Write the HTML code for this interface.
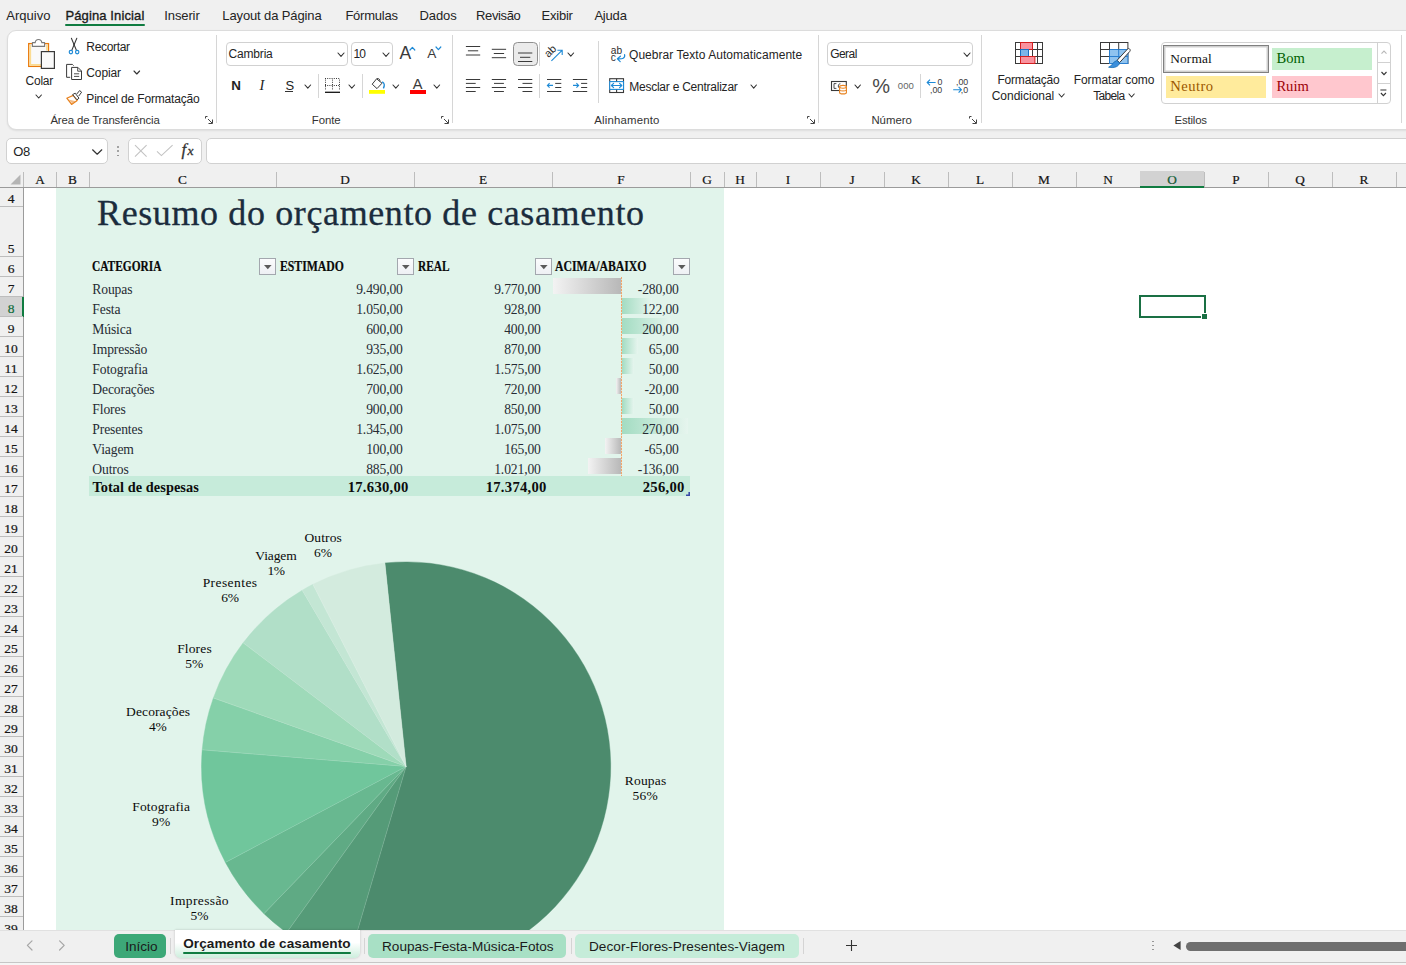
<!DOCTYPE html><html lang="pt-BR"><head><meta charset="utf-8"><title>Orçamento de casamento</title><style>
*{box-sizing:border-box;margin:0;padding:0}
html,body{width:1406px;height:965px;overflow:hidden;background:#f0f0f0}
body{position:relative;font-family:"Liberation Sans",sans-serif;color:#242424;font-size:12px}
.a{position:absolute;white-space:nowrap}
.menu{top:1px;height:30px;line-height:30px;font-size:13px;color:#242424}
.rib{left:7px;top:30px;width:1420px;height:100px;background:#fff;border:1px solid #dcdcdc;border-radius:9px;box-shadow:0 1px 2px rgba(0,0,0,.08)}
.t{font-size:12px;line-height:14px;color:#242424}
.gl{font-size:11.5px;line-height:14px;color:#3b3b3b}
.sep{width:1px;background:#d6d6d6}
.box{background:#fff;border:1px solid #d1d1d1;border-radius:4px}
.ser{font-family:"Liberation Serif",serif}
svg{position:absolute;overflow:visible}
.hd{font-weight:bold;font-size:13.9px;line-height:16px;color:#0a0a0a;transform-origin:0 50%;-webkit-text-stroke:.2px #0a0a0a}
.fb{width:16.5px;height:16.5px;background:linear-gradient(180deg,#fbfcfd,#eef0f4);border:1px solid #a3a7ae}
.c{font-size:13.6px;line-height:16px;color:#262b33;letter-spacing:-.12px}
.r{text-align:right}
.tt{font-weight:bold;font-size:14.67px;line-height:17px;color:#111}
.pl{font-size:13.33px;line-height:15px;color:#1f1f1f;text-align:center;transform:translateX(-50%)}
</style></head><body>
<div class="a" style="left:6.20px;top:7.90px;font-size:13px;line-height:16px;color:#242424;letter-spacing:0.032px">Arquivo</div>
<div class="a" style="left:65.50px;top:7.90px;font-size:13px;line-height:16px;color:#1b1b1b;letter-spacing:0.112px;-webkit-text-stroke:.35px #1b1b1b">Página Inicial</div>
<div class="a" style="left:164.30px;top:7.90px;font-size:13px;line-height:16px;color:#242424;letter-spacing:-0.118px">Inserir</div>
<div class="a" style="left:222.30px;top:7.90px;font-size:13px;line-height:16px;color:#242424;letter-spacing:-0.119px">Layout da Página</div>
<div class="a" style="left:345.40px;top:7.90px;font-size:13px;line-height:16px;color:#242424;letter-spacing:-0.236px">Fórmulas</div>
<div class="a" style="left:419.60px;top:7.90px;font-size:13px;line-height:16px;color:#242424;letter-spacing:-0.136px">Dados</div>
<div class="a" style="left:476.10px;top:7.90px;font-size:13px;line-height:16px;color:#242424;letter-spacing:-0.381px">Revisão</div>
<div class="a" style="left:541.60px;top:7.90px;font-size:13px;line-height:16px;color:#242424;letter-spacing:-0.236px">Exibir</div>
<div class="a" style="left:594.40px;top:7.90px;font-size:13px;line-height:16px;color:#242424;letter-spacing:-0.190px">Ajuda</div>
<div class="a" style="left:65.3px;top:24.3px;width:79.4px;height:2.1px;background:#107c41;border-radius:1px"></div>
<div class="a rib"></div>
<svg style="left:27px;top:37px" width="30" height="34" viewBox="27 37 30 34">
<rect x="28.7" y="43.6" width="19.8" height="22.8" fill="#f9f9f9" stroke="#ea7a0c" stroke-width="1.3"/>
<path d="M30.3 45V64.8H41" fill="none" stroke="#fbdc92" stroke-width="1.7"/>
<path d="M46.9 45V50.4" fill="none" stroke="#fbdc92" stroke-width="1.7"/>
<path d="M32.4 46.4V42.6H35.2C35.6 38.4 41.4 38.4 41.8 42.6H44.6V46.4Z" fill="#fff" stroke="#7a7a7a" stroke-width="1.1" stroke-linejoin="round"/>
<rect x="41.4" y="51.6" width="13" height="16.8" fill="#fafafa" stroke="#3a3a3a" stroke-width="1.2"/>
</svg>
<div class="a" style="left:25.60px;top:73.24px;font-size:12px;line-height:16px;color:#242424;letter-spacing:-0.277px">Colar</div>
<svg style="left:35.8px;top:94.6px" width="5.4" height="4"><path d="M0 0L2.7 3L5.4 0" fill="none" stroke="#333" stroke-width="1.1" stroke-linecap="round" stroke-linejoin="round"/></svg>
<svg style="left:67px;top:37px" width="14" height="18" viewBox="67 37 14 18">
<path d="M71.4 38.3L76.4 50.2M76.8 38.3L71.8 50.2" stroke="#3a3a3a" stroke-width="1.05" fill="none" stroke-linecap="round"/>
<circle cx="74.1" cy="44.6" r=".9" fill="#3a3a3a"/>
<circle cx="70.9" cy="52.1" r="1.7" fill="#fff" stroke="#1e8ad6" stroke-width="1.15"/>
<circle cx="77.2" cy="52.1" r="1.7" fill="#fff" stroke="#1e8ad6" stroke-width="1.15"/>
</svg>
<div class="a" style="left:86.30px;top:39.34px;font-size:12px;line-height:16px;color:#242424;letter-spacing:-0.327px">Recortar</div>
<svg style="left:65px;top:63px" width="18" height="18" viewBox="65 63 18 18">
<path d="M70.2 77.3H66.6V64.4H72.4L73.6 65.6" fill="none" stroke="#3a3a3a" stroke-width="1"/>
<path d="M71.6 67.4H77.9L81.5 71V79.5H71.6Z" fill="#fff" stroke="#3a3a3a" stroke-width="1"/>
<path d="M77.7 67.6V71.2H81.3" fill="none" stroke="#3a3a3a" stroke-width=".9"/>
<path d="M74 73.8H79.2M74 76.4H79.2" stroke="#3a3a3a" stroke-width=".9"/>
</svg>
<div class="a" style="left:86.30px;top:65.14px;font-size:12px;line-height:16px;color:#242424;letter-spacing:-0.127px">Copiar</div>
<svg style="left:133.6px;top:70.6px" width="5.6" height="4"><path d="M0 0L2.8 3L5.6 0" fill="none" stroke="#333" stroke-width="1.1" stroke-linecap="round" stroke-linejoin="round"/></svg>
<svg style="left:65px;top:89px" width="18" height="17" viewBox="65 89 18 17">
<path d="M66.8 98.2L73.2 95.4L77.2 100.6L71.6 104.4Z" fill="#fff" stroke="#e8821e" stroke-width="1.2" stroke-linejoin="round"/>
<path d="M68.3 99.6L72.4 103.6L76 101.2Z" fill="#e8821e" opacity=".55"/>
<path d="M72.6 94.6L75.2 93.2L79 98.2L77 99.8Z" fill="#fff" stroke="#3a3a3a" stroke-width="1" stroke-linejoin="round"/>
<path d="M76.6 94.2L79.6 90.6L81.6 92.2L78.8 96" fill="#fff" stroke="#3a3a3a" stroke-width="1" stroke-linejoin="round"/>
</svg>
<div class="a" style="left:86.30px;top:91.34px;font-size:12px;line-height:16px;color:#242424;letter-spacing:-0.172px">Pincel de Formatação</div>
<div class="a" style="left:50.40px;top:111.95px;font-size:11.4px;line-height:16px;color:#333;letter-spacing:-0.137px">Área de Transferência</div>
<svg style="left:205px;top:116.3px" width="8" height="8"><path d="M0.5 2.5V0.5H2.5M3 3L7 7M7.5 3.5V7.5H3.5" fill="none" stroke="#444" stroke-width="1"/></svg>
<div class="a sep" style="left:216px;top:35px;height:88px"></div>
<div class="a box" style="left:225.5px;top:42px;width:122px;height:24px"></div>
<div class="a" style="left:228.60px;top:46.04px;font-size:12px;line-height:16px;color:#242424;letter-spacing:-0.194px">Cambria</div>
<svg style="left:338.2px;top:52.6px" width="6" height="4.3"><path d="M0 0L3.0 3.3L6 0" fill="none" stroke="#333" stroke-width="1.1" stroke-linecap="round" stroke-linejoin="round"/></svg>
<div class="a box" style="left:350.5px;top:42px;width:42px;height:24px"></div>
<div class="a" style="left:353.40px;top:46.04px;font-size:12px;line-height:16px;color:#242424;letter-spacing:-0.880px">10</div>
<svg style="left:383.2px;top:52.6px" width="6" height="4.3"><path d="M0 0L3.0 3.3L6 0" fill="none" stroke="#333" stroke-width="1.1" stroke-linecap="round" stroke-linejoin="round"/></svg>
<div class="a" style="left:399.60px;top:45.44px;font-size:17.5px;line-height:16px;color:#3a3a3a;letter-spacing:-0.488px">A</div>
<svg style="left:410.2px;top:47px" width="6" height="4"><path d="M0 3L2.4 0.4L4.8 3" fill="none" stroke="#1e8ad6" stroke-width="1.2" stroke-linecap="round" stroke-linejoin="round"/></svg>
<div class="a" style="left:427.20px;top:46.49px;font-size:13.6px;line-height:16px;color:#3a3a3a;letter-spacing:0.122px">A</div>
<svg style="left:436px;top:47.4px" width="4.8" height="3.6"><path d="M0 0L2.4 2.6L4.8 0" fill="none" stroke="#1e8ad6" stroke-width="1.2" stroke-linecap="round" stroke-linejoin="round"/></svg>
<div class="a" style="left:231.30px;top:77.56px;font-size:13.4px;font-weight:bold;line-height:16px;color:#222;letter-spacing:0.528px">N</div>
<div class="a" style="left:259.60px;top:77.31px;font-family:'Liberation Serif',serif;font-size:14.5px;font-style:italic;line-height:16px;color:#222;letter-spacing:1.756px">I</div>
<div class="a" style="left:285.60px;top:77.50px;font-size:13px;line-height:16px;color:#222;letter-spacing:-1.272px">S</div>
<div class="a" style="left:285px;top:91px;width:8px;height:1px;background:#333"></div>
<svg style="left:304.6px;top:84.6px" width="5.6" height="4.2"><path d="M0 0L2.8 3.2L5.6 0" fill="none" stroke="#333" stroke-width="1.1" stroke-linecap="round" stroke-linejoin="round"/></svg>
<div class="a sep" style="left:318px;top:74px;height:24px"></div>
<svg style="left:324px;top:77px" width="18" height="17" viewBox="324 77 18 17">
<path d="M325 78.5H340M325 85.5H340M325.5 79.6V90.6M332.5 79.6V90.6M339.5 79.6V90.6" stroke="#3a3a3a" stroke-width="1" stroke-dasharray="1 1.2" fill="none"/>
<path d="M325 92.3H340" stroke="#111" stroke-width="1.3"/>
</svg>
<svg style="left:348.6px;top:84.6px" width="5.6" height="4.2"><path d="M0 0L2.8 3.2L5.6 0" fill="none" stroke="#333" stroke-width="1.1" stroke-linecap="round" stroke-linejoin="round"/></svg>
<div class="a sep" style="left:362px;top:74px;height:24px"></div>
<svg style="left:368px;top:77px" width="18" height="18" viewBox="368 77 18 18">
<path d="M376.6 78.8L372.2 84.2L377 88.6L382 83.2Z" fill="#fff" stroke="#3a3a3a" stroke-width="1" stroke-linejoin="round"/>
<path d="M376.8 78.6C378.6 78 380.2 79.4 380 81.4" fill="none" stroke="#3a3a3a" stroke-width=".9"/>
<path d="M382.6 82.2C384.4 83.2 384.6 85.8 383.6 87.8" fill="none" stroke="#1e8ad6" stroke-width="1.5" stroke-linecap="round"/>
<rect x="369" y="90" width="16" height="3.8" fill="#ffff00"/>
</svg>
<svg style="left:392.6px;top:84.6px" width="5.6" height="4.2"><path d="M0 0L2.8 3.2L5.6 0" fill="none" stroke="#333" stroke-width="1.1" stroke-linecap="round" stroke-linejoin="round"/></svg>
<div class="a" style="left:412.80px;top:76.44px;font-size:14.6px;line-height:16px;color:#3a3a3a;letter-spacing:0.866px">A</div>
<div class="a" style="left:410px;top:90px;width:16px;height:3.8px;background:#ff0000"></div>
<svg style="left:433.6px;top:84.6px" width="5.6" height="4.2"><path d="M0 0L2.8 3.2L5.6 0" fill="none" stroke="#333" stroke-width="1.1" stroke-linecap="round" stroke-linejoin="round"/></svg>
<div class="a" style="left:311.80px;top:111.95px;font-size:11.4px;line-height:16px;color:#333;letter-spacing:-0.088px">Fonte</div>
<svg style="left:441px;top:116.3px" width="8" height="8"><path d="M0.5 2.5V0.5H2.5M3 3L7 7M7.5 3.5V7.5H3.5" fill="none" stroke="#444" stroke-width="1"/></svg>
<div class="a sep" style="left:452px;top:35px;height:88px"></div>
<svg style="left:0;top:0" width="1" height="1"><path d="M465.9 46.5H480.2M467.9 50.8H478.2M465.9 55H480.2" stroke="#3a3a3a" stroke-width="1" fill="none"/></svg>
<svg style="left:0;top:0" width="1" height="1"><path d="M491.8 49.3H506.1M493.8 53.5H504.1M491.8 57.7H506.1" stroke="#3a3a3a" stroke-width="1" fill="none"/></svg>
<div class="a" style="left:513px;top:42px;width:24.5px;height:24px;background:#ebebeb;border:1px solid #8f8f8f;border-radius:4.5px"></div>
<svg style="left:0;top:0" width="1" height="1"><path d="M518.0 53H532.3M520.0 57.3H530.3M518.0 61.5H532.3" stroke="#3a3a3a" stroke-width="1" fill="none"/></svg>
<div class="a sep" style="left:539px;top:42px;height:24px"></div>
<svg style="left:544px;top:43px" width="20" height="20" viewBox="544 43 20 20">
<text x="0" y="0" transform="translate(548.4 58) rotate(-45)" font-family="Liberation Sans, sans-serif" font-size="10.8" fill="#2e2e2e">ab</text>
<path d="M551.4 60.8L561.8 50.6M557.4 50.2H562.2V55" fill="none" stroke="#1e8ad6" stroke-width="1.1"/>
</svg>
<svg style="left:567.8px;top:52.8px" width="5.6" height="4.2"><path d="M0 0L2.8 3.2L5.6 0" fill="none" stroke="#333" stroke-width="1.1" stroke-linecap="round" stroke-linejoin="round"/></svg>
<svg style="left:0;top:0" width="1" height="1"><path d="M465.9 79.5H480.2M465.9 83.4H475.7M465.9 87.5H480.2M465.9 91.5H475.7" stroke="#3a3a3a" stroke-width="1" fill="none"/></svg>
<svg style="left:0;top:0" width="1" height="1"><path d="M491.8 79.5H506.1M494.0 83.4H503.9M491.8 87.5H506.1M494.0 91.5H503.9" stroke="#3a3a3a" stroke-width="1" fill="none"/></svg>
<svg style="left:0;top:0" width="1" height="1"><path d="M518.0 79.5H532.3M522.5 83.4H532.3M518.0 87.5H532.3M522.5 91.5H532.3" stroke="#3a3a3a" stroke-width="1" fill="none"/></svg>
<div class="a sep" style="left:539px;top:74px;height:24px"></div>
<svg style="left:0;top:0" width="1" height="1"><path d="M547.0 79.5H561.3M555.2 83.4H561.3M555.2 87.5H561.3M547.0 91.5H561.3" stroke="#3a3a3a" stroke-width="1" fill="none"/></svg>
<svg style="left:0;top:0" width="1" height="1"><path d="M547.4 85.4H553M549.6 83.2L547.4 85.4L549.6 87.6" stroke="#1e8ad6" stroke-width="1.1" fill="none"/></svg>
<svg style="left:0;top:0" width="1" height="1"><path d="M572.9 79.5H587.2M581.1 83.4H587.2M581.1 87.5H587.2M572.9 91.5H587.2" stroke="#3a3a3a" stroke-width="1" fill="none"/></svg>
<svg style="left:0;top:0" width="1" height="1"><path d="M573 85.4H578.6M576.4 83.2L578.6 85.4L576.4 87.6" stroke="#1e8ad6" stroke-width="1.1" fill="none"/></svg>
<div class="a sep" style="left:598px;top:41px;height:61.5px"></div>
<svg style="left:609px;top:44px" width="18" height="20" viewBox="609 44 18 20">
<text x="610.8" y="54" font-family="Liberation Sans, sans-serif" font-size="10.2" fill="#2e2e2e">ab</text>
<text x="610.8" y="61" font-family="Liberation Sans, sans-serif" font-size="10.2" fill="#2e2e2e">c</text>
<path d="M624.6 54.6C625.4 58.2 622.4 59.2 617.6 58.8M620.4 56.2L617.4 58.8L620.2 61.6" fill="none" stroke="#1e8ad6" stroke-width="1.2" stroke-linecap="round" stroke-linejoin="round"/>
</svg>
<div class="a" style="left:629.00px;top:47.04px;font-size:12px;line-height:16px;color:#242424;letter-spacing:0.046px">Quebrar Texto Automaticamente</div>
<svg style="left:608px;top:77px" width="18" height="17" viewBox="608 77 18 17">
<rect x="609.7" y="78.7" width="13.8" height="13.8" fill="#fff" stroke="#3a3a3a" stroke-width="1.1"/>
<rect x="609.7" y="81.6" width="13.8" height="7.8" fill="#fff" stroke="#1e8ad6" stroke-width="1.1"/>
<path d="M616.6 78.7V81.2M616.6 89.8V92.5" stroke="#3a3a3a" stroke-width="1.1"/>
<path d="M611.6 85.5H621.6M613.6 83.3L611.4 85.5L613.6 87.7M619.6 83.3L621.8 85.5L619.6 87.7" fill="none" stroke="#1e8ad6" stroke-width="1.15" stroke-linecap="round" stroke-linejoin="round"/>
</svg>
<div class="a" style="left:629.20px;top:78.94px;font-size:12px;line-height:16px;color:#242424;letter-spacing:-0.237px">Mesclar e Centralizar</div>
<svg style="left:750.8px;top:84.6px" width="5.4" height="4.1"><path d="M0 0L2.7 3.1L5.4 0" fill="none" stroke="#333" stroke-width="1.1" stroke-linecap="round" stroke-linejoin="round"/></svg>
<div class="a" style="left:594.20px;top:111.95px;font-size:11.4px;line-height:16px;color:#333;letter-spacing:0.188px">Alinhamento</div>
<svg style="left:807px;top:116.3px" width="8" height="8"><path d="M0.5 2.5V0.5H2.5M3 3L7 7M7.5 3.5V7.5H3.5" fill="none" stroke="#444" stroke-width="1"/></svg>
<div class="a sep" style="left:818px;top:35px;height:88px"></div>
<div class="a box" style="left:827px;top:42px;width:145.5px;height:24px"></div>
<div class="a" style="left:830.20px;top:46.04px;font-size:12px;line-height:16px;color:#242424;letter-spacing:-0.549px">Geral</div>
<svg style="left:963.6px;top:52.6px" width="6" height="4.3"><path d="M0 0L3.0 3.3L6 0" fill="none" stroke="#333" stroke-width="1.1" stroke-linecap="round" stroke-linejoin="round"/></svg>
<svg style="left:829px;top:78px" width="21" height="17" viewBox="829 78 21 17">
<rect x="831.5" y="81.5" width="14.8" height="9" fill="#fff" stroke="#3a3a3a" stroke-width="1.1"/>
<path d="M836.4 83.6H834V88.4H836.4M840.4 83.8C837.6 83.4 837.6 88.6 840.4 88.2" fill="none" stroke="#3a3a3a" stroke-width=".9"/>
<path d="M839.6 86.8V92.4C839.6 94.4 846.4 94.4 846.4 92.4V86.8" fill="#fff" stroke="#e8821e" stroke-width="1.1"/>
<ellipse cx="843" cy="86.8" rx="3.4" ry="1.4" fill="#fff" stroke="#e8821e" stroke-width="1.1"/>
<path d="M839.6 89.6C839.6 91.4 846.4 91.4 846.4 89.6" fill="none" stroke="#e8821e" stroke-width="1"/>
</svg>
<svg style="left:854.6px;top:84.8px" width="5.4" height="4.1"><path d="M0 0L2.7 3.1L5.4 0" fill="none" stroke="#333" stroke-width="1.1" stroke-linecap="round" stroke-linejoin="round"/></svg>
<div class="a" style="left:872.20px;top:78.47px;font-size:20px;line-height:16px;color:#4a4a4a;letter-spacing:-2.197px">%</div>
<div class="a" style="left:897.80px;top:78.07px;font-size:9.6px;line-height:16px;color:#666;letter-spacing:0.061px">000</div>
<div class="a sep" style="left:920px;top:74px;height:24px"></div>
<svg style="left:925px;top:76px" width="20" height="19" viewBox="925 76 20 19">
<path d="M927.2 82.5H935.6M930 79.6L927.2 82.5L930 85.4" fill="none" stroke="#1e8ad6" stroke-width="1.15"/>
<text x="937.4" y="84.9" font-family="Liberation Sans, sans-serif" font-size="8.8" fill="#3a3a3a">0</text>
<text x="930" y="93.3" font-family="Liberation Sans, sans-serif" font-size="8.8" fill="#3a3a3a">,00</text>
</svg>
<svg style="left:951px;top:76px" width="20" height="19" viewBox="951 76 20 19">
<text x="956" y="84.9" font-family="Liberation Sans, sans-serif" font-size="8.8" fill="#3a3a3a">,00</text>
<path d="M953.2 89.7H961.4M958.6 86.8L961.4 89.7L958.6 92.6" fill="none" stroke="#1e8ad6" stroke-width="1.15"/>
<text x="960.8" y="93.3" font-family="Liberation Sans, sans-serif" font-size="8.8" fill="#3a3a3a">,0</text>
</svg>
<div class="a" style="left:871.40px;top:111.95px;font-size:11.4px;line-height:16px;color:#333;letter-spacing:-0.019px">Número</div>
<svg style="left:969.4px;top:116.3px" width="8" height="8"><path d="M0.5 2.5V0.5H2.5M3 3L7 7M7.5 3.5V7.5H3.5" fill="none" stroke="#444" stroke-width="1"/></svg>
<div class="a sep" style="left:980.5px;top:35px;height:88px"></div>
<svg style="left:1014px;top:40px" width="31" height="25" viewBox="1014 40 31 25">
<rect x="1015.5" y="42.5" width="27" height="21" fill="#fff" stroke="#3a3a3a" stroke-width="1"/>
<path d="M1015.5 49.5H1042.5M1015.5 56.5H1042.5M1020.5 42.5V63.5M1037.5 42.5V63.5M1032.5 42.5V63.5" stroke="#3a3a3a" stroke-width="1" fill="none"/>
<rect x="1020.5" y="42.5" width="12" height="7" fill="#f9929e" stroke="#d21f1f" stroke-width="1"/>
<rect x="1020.5" y="49.5" width="8" height="7" fill="#7cb5e8" stroke="#1a6fc0" stroke-width="1"/>
<rect x="1020.5" y="56.5" width="14.4" height="7" fill="#f9929e" stroke="#d21f1f" stroke-width="1"/>
</svg>
<div class="a" style="left:997.40px;top:71.64px;font-size:12px;line-height:16px;color:#242424;letter-spacing:-0.183px">Formatação</div>
<div class="a" style="left:991.70px;top:87.84px;font-size:12px;line-height:16px;color:#242424;letter-spacing:-0.011px">Condicional</div>
<svg style="left:1058.8px;top:93.8px" width="5.2" height="4"><path d="M0 0L2.6 3L5.2 0" fill="none" stroke="#333" stroke-width="1.1" stroke-linecap="round" stroke-linejoin="round"/></svg>
<svg style="left:1099px;top:40px" width="33" height="30" viewBox="1099 40 33 30">
<rect x="1100.5" y="42.5" width="27.4" height="21" fill="#fff" stroke="#3a3a3a" stroke-width="1"/>
<rect x="1109.5" y="49.5" width="18.4" height="14" fill="#8fc3ef" stroke="#2a7fd0" stroke-width="1"/>
<path d="M1100.5 49.5H1109.5M1100.5 56.5H1109.5M1109.5 42.5V49.5M1118.7 42.5V49.5" stroke="#3a3a3a" stroke-width="1" fill="none"/>
<path d="M1109.5 56.5H1127.9M1118.7 49.5V63.5" stroke="#2a7fd0" stroke-width="1" fill="none"/>
<path d="M1129.4 48.8C1130.4 49.6 1130.4 50.6 1129.8 51.4L1119.6 62.6L1117 60.4L1127.4 49.2C1128 48.5 1128.8 48.3 1129.4 48.8Z" fill="#fff" stroke="#3a3a3a" stroke-width="1" stroke-linejoin="round"/>
<path d="M1116.8 60.6L1119.6 63C1119 66 1115 68.6 1108.6 67.2C1112.4 66.2 1112.6 61.6 1116.8 60.6Z" fill="#3c8fdc" stroke="#1b6fb4" stroke-width=".8" stroke-linejoin="round"/>
</svg>
<div class="a" style="left:1073.70px;top:71.64px;font-size:12px;line-height:16px;color:#242424;letter-spacing:-0.051px">Formatar como</div>
<div class="a" style="left:1093.20px;top:87.84px;font-size:12px;line-height:16px;color:#242424;letter-spacing:-0.696px">Tabela</div>
<svg style="left:1129px;top:93.8px" width="5.2" height="4"><path d="M0 0L2.6 3L5.2 0" fill="none" stroke="#333" stroke-width="1.1" stroke-linecap="round" stroke-linejoin="round"/></svg>
<div class="a box" style="left:1161px;top:42px;width:230px;height:61.5px;border-radius:4px"></div>
<div class="a" style="left:1163px;top:45px;width:106px;height:27.5px;background:#fff;border:1.5px solid #808080;box-shadow:inset 0 0 0 1.5px #cfcfcf"></div>
<div class="a" style="left:1170.30px;top:50.88px;font-family:'Liberation Serif',serif;font-size:13.4px;line-height:16px;color:#111;letter-spacing:0.099px">Normal</div>
<div class="a" style="left:1272px;top:48px;width:100px;height:22px;background:#c6efce"></div>
<div class="a" style="left:1276.40px;top:50.47px;font-family:'Liberation Serif',serif;font-size:14.6px;line-height:16px;color:#006100;letter-spacing:0.070px">Bom</div>
<div class="a" style="left:1166px;top:76px;width:100px;height:22px;background:#ffeb9c"></div>
<div class="a" style="left:1170.30px;top:78.47px;font-family:'Liberation Serif',serif;font-size:14.6px;line-height:16px;color:#9c5700;letter-spacing:0.461px">Neutro</div>
<div class="a" style="left:1272px;top:76px;width:100px;height:22px;background:#ffc7ce"></div>
<div class="a" style="left:1276.40px;top:78.47px;font-family:'Liberation Serif',serif;font-size:14.6px;line-height:16px;color:#9c0006;letter-spacing:-0.009px">Ruim</div>
<div class="a" style="left:1376.5px;top:43px;width:1px;height:59.5px;background:#d1d1d1"></div>
<div class="a" style="left:1377px;top:62px;width:13px;height:1px;background:#d1d1d1"></div>
<div class="a" style="left:1377px;top:83px;width:13px;height:1px;background:#d1d1d1"></div>
<svg style="left:1380.6px;top:50.4px" width="7" height="5"><path d="M0.5 3.6L3 1L5.5 3.6" fill="none" stroke="#b8b8b8" stroke-width="1.1"/></svg>
<svg style="left:1380.6px;top:70.6px" width="7" height="5"><path d="M0.5 1L3 3.6L5.5 1" fill="none" stroke="#333" stroke-width="1.1"/></svg>
<svg style="left:1380.4px;top:89px" width="8" height="9"><path d="M0.4 1H6.4M0.9 4L3.4 6.6L5.9 4" fill="none" stroke="#333" stroke-width="1.1"/></svg>
<div class="a" style="left:1174.60px;top:112.15px;font-size:11.4px;line-height:16px;color:#333;letter-spacing:-0.195px">Estilos</div>
<div class="a sep" style="left:1401px;top:35px;height:88px"></div>
<div class="a box" style="left:6px;top:138px;width:101.5px;height:25.5px;border-radius:5px"></div>
<div class="a" style="left:13.20px;top:143.70px;font-size:13px;line-height:16px;color:#242424;letter-spacing:-0.372px">O8</div>
<svg style="left:92px;top:149px" width="11" height="7"><path d="M0.6 0.8L5.2 5.2L9.8 0.8" fill="none" stroke="#333" stroke-width="1.2" stroke-linecap="round" stroke-linejoin="round"/></svg>
<div class="a" style="left:117.2px;top:146.20000000000002px;width:1.5px;height:1.5px;background:#8a8a8a;border-radius:1px"></div>
<div class="a" style="left:117.2px;top:150.4px;width:1.5px;height:1.5px;background:#8a8a8a;border-radius:1px"></div>
<div class="a" style="left:117.2px;top:154.70000000000002px;width:1.5px;height:1.5px;background:#8a8a8a;border-radius:1px"></div>
<div class="a box" style="left:128px;top:138px;width:73.5px;height:25.5px;border-radius:5px"></div>
<svg style="left:134px;top:144px" width="14" height="14"><path d="M1 1.2L12.6 12.6M12.6 1.2L1 12.6" fill="none" stroke="#c3c3c3" stroke-width="1.1"/></svg>
<svg style="left:156px;top:144px" width="18" height="13"><path d="M1 7.4L5.4 11.6L16.6 1.2" fill="none" stroke="#c3c3c3" stroke-width="1.1"/></svg>
<div class="a" style="left:181.60px;top:141.76px;font-family:'Liberation Serif',serif;font-size:17px;font-style:italic;line-height:16px;color:#333;-webkit-text-stroke:.3px #333">f</div>
<div class="a" style="left:187.40px;top:143.34px;font-family:'Liberation Serif',serif;font-size:13.5px;font-style:italic;line-height:16px;color:#333;-webkit-text-stroke:.3px #333">x</div>
<div class="a box" style="left:206px;top:138px;width:1215px;height:25.5px;border-radius:5px"></div>
<div class="a" style="left:0;top:165px;width:1406px;height:765px;background:#fff;overflow:hidden" id="sheet">
<div class="a" style="left:56px;top:23px;width:668px;height:742px;background:#e1f4eb"></div>
<div class="a" style="left:0;top:0;width:1406px;height:23px;background:#f0f0f0;border-bottom:1px solid #9b9b9b"></div>
<div class="a ser" style="left:24px;top:6px;width:32px;height:17px;line-height:17px;text-align:center;font-size:13.3px;color:#141414;-webkit-text-stroke:.2px #141414;">A</div>
<div class="a" style="left:56px;top:7px;width:1px;height:15px;background:#bdbdbd"></div>
<div class="a ser" style="left:56px;top:6px;width:33px;height:17px;line-height:17px;text-align:center;font-size:13.3px;color:#141414;-webkit-text-stroke:.2px #141414;">B</div>
<div class="a" style="left:89px;top:7px;width:1px;height:15px;background:#bdbdbd"></div>
<div class="a ser" style="left:89px;top:6px;width:187px;height:17px;line-height:17px;text-align:center;font-size:13.3px;color:#141414;-webkit-text-stroke:.2px #141414;">C</div>
<div class="a" style="left:276px;top:7px;width:1px;height:15px;background:#bdbdbd"></div>
<div class="a ser" style="left:276px;top:6px;width:138px;height:17px;line-height:17px;text-align:center;font-size:13.3px;color:#141414;-webkit-text-stroke:.2px #141414;">D</div>
<div class="a" style="left:414px;top:7px;width:1px;height:15px;background:#bdbdbd"></div>
<div class="a ser" style="left:414px;top:6px;width:138px;height:17px;line-height:17px;text-align:center;font-size:13.3px;color:#141414;-webkit-text-stroke:.2px #141414;">E</div>
<div class="a" style="left:552px;top:7px;width:1px;height:15px;background:#bdbdbd"></div>
<div class="a ser" style="left:552px;top:6px;width:138px;height:17px;line-height:17px;text-align:center;font-size:13.3px;color:#141414;-webkit-text-stroke:.2px #141414;">F</div>
<div class="a" style="left:690px;top:7px;width:1px;height:15px;background:#bdbdbd"></div>
<div class="a ser" style="left:690px;top:6px;width:34px;height:17px;line-height:17px;text-align:center;font-size:13.3px;color:#141414;-webkit-text-stroke:.2px #141414;">G</div>
<div class="a" style="left:724px;top:7px;width:1px;height:15px;background:#bdbdbd"></div>
<div class="a ser" style="left:724px;top:6px;width:32px;height:17px;line-height:17px;text-align:center;font-size:13.3px;color:#141414;-webkit-text-stroke:.2px #141414;">H</div>
<div class="a" style="left:756px;top:7px;width:1px;height:15px;background:#bdbdbd"></div>
<div class="a ser" style="left:756px;top:6px;width:64px;height:17px;line-height:17px;text-align:center;font-size:13.3px;color:#141414;-webkit-text-stroke:.2px #141414;">I</div>
<div class="a" style="left:820px;top:7px;width:1px;height:15px;background:#bdbdbd"></div>
<div class="a ser" style="left:820px;top:6px;width:64px;height:17px;line-height:17px;text-align:center;font-size:13.3px;color:#141414;-webkit-text-stroke:.2px #141414;">J</div>
<div class="a" style="left:884px;top:7px;width:1px;height:15px;background:#bdbdbd"></div>
<div class="a ser" style="left:884px;top:6px;width:64px;height:17px;line-height:17px;text-align:center;font-size:13.3px;color:#141414;-webkit-text-stroke:.2px #141414;">K</div>
<div class="a" style="left:948px;top:7px;width:1px;height:15px;background:#bdbdbd"></div>
<div class="a ser" style="left:948px;top:6px;width:64px;height:17px;line-height:17px;text-align:center;font-size:13.3px;color:#141414;-webkit-text-stroke:.2px #141414;">L</div>
<div class="a" style="left:1012px;top:7px;width:1px;height:15px;background:#bdbdbd"></div>
<div class="a ser" style="left:1012px;top:6px;width:64px;height:17px;line-height:17px;text-align:center;font-size:13.3px;color:#141414;-webkit-text-stroke:.2px #141414;">M</div>
<div class="a" style="left:1076px;top:7px;width:1px;height:15px;background:#bdbdbd"></div>
<div class="a ser" style="left:1076px;top:6px;width:64px;height:17px;line-height:17px;text-align:center;font-size:13.3px;color:#141414;-webkit-text-stroke:.2px #141414;">N</div>
<div class="a" style="left:1140px;top:7px;width:1px;height:15px;background:#bdbdbd"></div>
<div class="a ser" style="left:1140px;top:6px;width:64px;height:17px;line-height:17px;text-align:center;font-size:13.3px;color:#141414;-webkit-text-stroke:.2px #141414;background:#d2d2d2;border-bottom:2px solid #107c41;color:#0e6b39;">O</div>
<div class="a" style="left:1204px;top:7px;width:1px;height:15px;background:#bdbdbd"></div>
<div class="a ser" style="left:1204px;top:6px;width:64px;height:17px;line-height:17px;text-align:center;font-size:13.3px;color:#141414;-webkit-text-stroke:.2px #141414;">P</div>
<div class="a" style="left:1268px;top:7px;width:1px;height:15px;background:#bdbdbd"></div>
<div class="a ser" style="left:1268px;top:6px;width:64px;height:17px;line-height:17px;text-align:center;font-size:13.3px;color:#141414;-webkit-text-stroke:.2px #141414;">Q</div>
<div class="a" style="left:1332px;top:7px;width:1px;height:15px;background:#bdbdbd"></div>
<div class="a ser" style="left:1332px;top:6px;width:64px;height:17px;line-height:17px;text-align:center;font-size:13.3px;color:#141414;-webkit-text-stroke:.2px #141414;">R</div>
<div class="a" style="left:1396px;top:7px;width:1px;height:15px;background:#bdbdbd"></div>
<div class="a ser" style="left:1396px;top:6px;width:64px;height:17px;line-height:17px;text-align:center;font-size:13.3px;color:#141414;-webkit-text-stroke:.2px #141414;"></div>
<div class="a" style="left:1460px;top:7px;width:1px;height:15px;background:#bdbdbd"></div>
<svg style="left:10px;top:9px" width="11" height="11"><path d="M10.5 0.5V10.5H0.5Z" fill="#b5b5b5"/></svg>
<div class="a" style="left:23px;top:7px;width:1px;height:15px;background:#bdbdbd"></div>
<div class="a" style="left:0;top:23px;width:24px;height:742px;background:#f0f0f0;border-right:1px solid #9b9b9b"></div>
<div class="a ser" style="left:0;top:24.5px;width:22px;height:17px;line-height:17px;text-align:center;font-size:13.5px;color:#141414;-webkit-text-stroke:.2px #141414">4</div>
<div class="a" style="left:0;top:41.0px;width:23px;height:1px;background:#bdbdbd"></div>
<div class="a ser" style="left:0;top:74.5px;width:22px;height:17px;line-height:17px;text-align:center;font-size:13.5px;color:#141414;-webkit-text-stroke:.2px #141414">5</div>
<div class="a" style="left:0;top:91.0px;width:23px;height:1px;background:#bdbdbd"></div>
<div class="a ser" style="left:0;top:94.5px;width:22px;height:17px;line-height:17px;text-align:center;font-size:13.5px;color:#141414;-webkit-text-stroke:.2px #141414">6</div>
<div class="a" style="left:0;top:111.0px;width:23px;height:1px;background:#bdbdbd"></div>
<div class="a ser" style="left:0;top:114.5px;width:22px;height:17px;line-height:17px;text-align:center;font-size:13.5px;color:#141414;-webkit-text-stroke:.2px #141414">7</div>
<div class="a" style="left:0;top:131.0px;width:23px;height:1px;background:#bdbdbd"></div>
<div class="a" style="left:0;top:132.0px;width:24px;height:20.0px;background:#d2d2d2;border-right:2px solid #107c41"></div>
<div class="a ser" style="left:0;top:134.5px;width:22px;height:17px;line-height:17px;text-align:center;font-size:13.5px;color:#0e6b39;-webkit-text-stroke:.2px #0e6b39">8</div>
<div class="a" style="left:0;top:151.0px;width:23px;height:1px;background:#bdbdbd"></div>
<div class="a ser" style="left:0;top:154.5px;width:22px;height:17px;line-height:17px;text-align:center;font-size:13.5px;color:#141414;-webkit-text-stroke:.2px #141414">9</div>
<div class="a" style="left:0;top:171.0px;width:23px;height:1px;background:#bdbdbd"></div>
<div class="a ser" style="left:0;top:174.5px;width:22px;height:17px;line-height:17px;text-align:center;font-size:13.5px;color:#141414;-webkit-text-stroke:.2px #141414">10</div>
<div class="a" style="left:0;top:191.0px;width:23px;height:1px;background:#bdbdbd"></div>
<div class="a ser" style="left:0;top:194.5px;width:22px;height:17px;line-height:17px;text-align:center;font-size:13.5px;color:#141414;-webkit-text-stroke:.2px #141414">11</div>
<div class="a" style="left:0;top:211.0px;width:23px;height:1px;background:#bdbdbd"></div>
<div class="a ser" style="left:0;top:214.5px;width:22px;height:17px;line-height:17px;text-align:center;font-size:13.5px;color:#141414;-webkit-text-stroke:.2px #141414">12</div>
<div class="a" style="left:0;top:231.0px;width:23px;height:1px;background:#bdbdbd"></div>
<div class="a ser" style="left:0;top:234.5px;width:22px;height:17px;line-height:17px;text-align:center;font-size:13.5px;color:#141414;-webkit-text-stroke:.2px #141414">13</div>
<div class="a" style="left:0;top:251.0px;width:23px;height:1px;background:#bdbdbd"></div>
<div class="a ser" style="left:0;top:254.5px;width:22px;height:17px;line-height:17px;text-align:center;font-size:13.5px;color:#141414;-webkit-text-stroke:.2px #141414">14</div>
<div class="a" style="left:0;top:271.0px;width:23px;height:1px;background:#bdbdbd"></div>
<div class="a ser" style="left:0;top:274.5px;width:22px;height:17px;line-height:17px;text-align:center;font-size:13.5px;color:#141414;-webkit-text-stroke:.2px #141414">15</div>
<div class="a" style="left:0;top:291.0px;width:23px;height:1px;background:#bdbdbd"></div>
<div class="a ser" style="left:0;top:294.5px;width:22px;height:17px;line-height:17px;text-align:center;font-size:13.5px;color:#141414;-webkit-text-stroke:.2px #141414">16</div>
<div class="a" style="left:0;top:311.0px;width:23px;height:1px;background:#bdbdbd"></div>
<div class="a ser" style="left:0;top:314.5px;width:22px;height:17px;line-height:17px;text-align:center;font-size:13.5px;color:#141414;-webkit-text-stroke:.2px #141414">17</div>
<div class="a" style="left:0;top:331.0px;width:23px;height:1px;background:#bdbdbd"></div>
<div class="a ser" style="left:0;top:334.5px;width:22px;height:17px;line-height:17px;text-align:center;font-size:13.5px;color:#141414;-webkit-text-stroke:.2px #141414">18</div>
<div class="a" style="left:0;top:351.0px;width:23px;height:1px;background:#bdbdbd"></div>
<div class="a ser" style="left:0;top:354.5px;width:22px;height:17px;line-height:17px;text-align:center;font-size:13.5px;color:#141414;-webkit-text-stroke:.2px #141414">19</div>
<div class="a" style="left:0;top:371.0px;width:23px;height:1px;background:#bdbdbd"></div>
<div class="a ser" style="left:0;top:374.5px;width:22px;height:17px;line-height:17px;text-align:center;font-size:13.5px;color:#141414;-webkit-text-stroke:.2px #141414">20</div>
<div class="a" style="left:0;top:391.0px;width:23px;height:1px;background:#bdbdbd"></div>
<div class="a ser" style="left:0;top:394.5px;width:22px;height:17px;line-height:17px;text-align:center;font-size:13.5px;color:#141414;-webkit-text-stroke:.2px #141414">21</div>
<div class="a" style="left:0;top:411.0px;width:23px;height:1px;background:#bdbdbd"></div>
<div class="a ser" style="left:0;top:414.5px;width:22px;height:17px;line-height:17px;text-align:center;font-size:13.5px;color:#141414;-webkit-text-stroke:.2px #141414">22</div>
<div class="a" style="left:0;top:431.0px;width:23px;height:1px;background:#bdbdbd"></div>
<div class="a ser" style="left:0;top:434.5px;width:22px;height:17px;line-height:17px;text-align:center;font-size:13.5px;color:#141414;-webkit-text-stroke:.2px #141414">23</div>
<div class="a" style="left:0;top:451.0px;width:23px;height:1px;background:#bdbdbd"></div>
<div class="a ser" style="left:0;top:454.5px;width:22px;height:17px;line-height:17px;text-align:center;font-size:13.5px;color:#141414;-webkit-text-stroke:.2px #141414">24</div>
<div class="a" style="left:0;top:471.0px;width:23px;height:1px;background:#bdbdbd"></div>
<div class="a ser" style="left:0;top:474.5px;width:22px;height:17px;line-height:17px;text-align:center;font-size:13.5px;color:#141414;-webkit-text-stroke:.2px #141414">25</div>
<div class="a" style="left:0;top:491.0px;width:23px;height:1px;background:#bdbdbd"></div>
<div class="a ser" style="left:0;top:494.5px;width:22px;height:17px;line-height:17px;text-align:center;font-size:13.5px;color:#141414;-webkit-text-stroke:.2px #141414">26</div>
<div class="a" style="left:0;top:511.0px;width:23px;height:1px;background:#bdbdbd"></div>
<div class="a ser" style="left:0;top:514.5px;width:22px;height:17px;line-height:17px;text-align:center;font-size:13.5px;color:#141414;-webkit-text-stroke:.2px #141414">27</div>
<div class="a" style="left:0;top:531.0px;width:23px;height:1px;background:#bdbdbd"></div>
<div class="a ser" style="left:0;top:534.5px;width:22px;height:17px;line-height:17px;text-align:center;font-size:13.5px;color:#141414;-webkit-text-stroke:.2px #141414">28</div>
<div class="a" style="left:0;top:551.0px;width:23px;height:1px;background:#bdbdbd"></div>
<div class="a ser" style="left:0;top:554.5px;width:22px;height:17px;line-height:17px;text-align:center;font-size:13.5px;color:#141414;-webkit-text-stroke:.2px #141414">29</div>
<div class="a" style="left:0;top:571.0px;width:23px;height:1px;background:#bdbdbd"></div>
<div class="a ser" style="left:0;top:574.5px;width:22px;height:17px;line-height:17px;text-align:center;font-size:13.5px;color:#141414;-webkit-text-stroke:.2px #141414">30</div>
<div class="a" style="left:0;top:591.0px;width:23px;height:1px;background:#bdbdbd"></div>
<div class="a ser" style="left:0;top:594.5px;width:22px;height:17px;line-height:17px;text-align:center;font-size:13.5px;color:#141414;-webkit-text-stroke:.2px #141414">31</div>
<div class="a" style="left:0;top:611.0px;width:23px;height:1px;background:#bdbdbd"></div>
<div class="a ser" style="left:0;top:614.5px;width:22px;height:17px;line-height:17px;text-align:center;font-size:13.5px;color:#141414;-webkit-text-stroke:.2px #141414">32</div>
<div class="a" style="left:0;top:631.0px;width:23px;height:1px;background:#bdbdbd"></div>
<div class="a ser" style="left:0;top:634.5px;width:22px;height:17px;line-height:17px;text-align:center;font-size:13.5px;color:#141414;-webkit-text-stroke:.2px #141414">33</div>
<div class="a" style="left:0;top:651.0px;width:23px;height:1px;background:#bdbdbd"></div>
<div class="a ser" style="left:0;top:654.5px;width:22px;height:17px;line-height:17px;text-align:center;font-size:13.5px;color:#141414;-webkit-text-stroke:.2px #141414">34</div>
<div class="a" style="left:0;top:671.0px;width:23px;height:1px;background:#bdbdbd"></div>
<div class="a ser" style="left:0;top:674.5px;width:22px;height:17px;line-height:17px;text-align:center;font-size:13.5px;color:#141414;-webkit-text-stroke:.2px #141414">35</div>
<div class="a" style="left:0;top:691.0px;width:23px;height:1px;background:#bdbdbd"></div>
<div class="a ser" style="left:0;top:694.5px;width:22px;height:17px;line-height:17px;text-align:center;font-size:13.5px;color:#141414;-webkit-text-stroke:.2px #141414">36</div>
<div class="a" style="left:0;top:711.0px;width:23px;height:1px;background:#bdbdbd"></div>
<div class="a ser" style="left:0;top:714.5px;width:22px;height:17px;line-height:17px;text-align:center;font-size:13.5px;color:#141414;-webkit-text-stroke:.2px #141414">37</div>
<div class="a" style="left:0;top:731.0px;width:23px;height:1px;background:#bdbdbd"></div>
<div class="a ser" style="left:0;top:734.5px;width:22px;height:17px;line-height:17px;text-align:center;font-size:13.5px;color:#141414;-webkit-text-stroke:.2px #141414">38</div>
<div class="a" style="left:0;top:751.0px;width:23px;height:1px;background:#bdbdbd"></div>
<div class="a ser" style="left:0;top:754.5px;width:22px;height:17px;line-height:17px;text-align:center;font-size:13.5px;color:#141414;-webkit-text-stroke:.2px #141414">39</div>
<div class="a" style="left:0;top:771.0px;width:23px;height:1px;background:#bdbdbd"></div>
<div class="a ser" style="left:97px;top:26px;font-size:36px;line-height:44px;letter-spacing:.62px;color:#1b2c3d;-webkit-text-stroke:.3px #1b2c3d">Resumo do orçamento de casamento</div>
<div class="a ser hd" style="left:92.2px;top:93.5px;transform:scaleX(0.8199)">CATEGORIA</div>
<div class="a ser hd" style="left:279.6px;top:93.5px;transform:scaleX(0.8435)">ESTIMADO</div>
<div class="a ser hd" style="left:417.6px;top:93.5px;transform:scaleX(0.8162)">REAL</div>
<div class="a ser hd" style="left:555.2px;top:93.5px;transform:scaleX(0.8469)">ACIMA/ABAIXO</div>
<div class="a fb" style="left:259px;top:93px"><svg style="left:4px;top:5.5px" width="8" height="5"><path d="M0 0H7.6L3.8 4.2Z" fill="#5b5b5b"/></svg></div>
<div class="a fb" style="left:397px;top:93px"><svg style="left:4px;top:5.5px" width="8" height="5"><path d="M0 0H7.6L3.8 4.2Z" fill="#5b5b5b"/></svg></div>
<div class="a fb" style="left:535px;top:93px"><svg style="left:4px;top:5.5px" width="8" height="5"><path d="M0 0H7.6L3.8 4.2Z" fill="#5b5b5b"/></svg></div>
<div class="a fb" style="left:673px;top:93px"><svg style="left:4px;top:5.5px" width="8" height="5"><path d="M0 0H7.6L3.8 4.2Z" fill="#5b5b5b"/></svg></div>
<div class="a" style="left:553.1px;top:113.0px;width:67.9px;height:16px;background:linear-gradient(90deg,#f3f3f3,#b8b8b8)"></div>
<div class="a ser c" style="left:92.3px;top:116.5px">Roupas</div>
<div class="a ser c r" style="left:300px;width:102.8px;top:116.5px">9.490,00</div>
<div class="a ser c r" style="left:438px;width:102.8px;top:116.5px">9.770,00</div>
<div class="a ser c r" style="left:576px;width:102.8px;top:116.5px">-280,00</div>
<div class="a" style="left:622.3px;top:133.0px;width:29.6px;height:16px;background:linear-gradient(90deg,#a3dcc2,#e6f5ee)"></div>
<div class="a ser c" style="left:92.3px;top:136.5px">Festa</div>
<div class="a ser c r" style="left:300px;width:102.8px;top:136.5px">1.050,00</div>
<div class="a ser c r" style="left:438px;width:102.8px;top:136.5px">928,00</div>
<div class="a ser c r" style="left:576px;width:102.8px;top:136.5px">122,00</div>
<div class="a" style="left:622.3px;top:153.0px;width:48.5px;height:16px;background:linear-gradient(90deg,#a3dcc2,#e6f5ee)"></div>
<div class="a ser c" style="left:92.3px;top:156.5px">Música</div>
<div class="a ser c r" style="left:300px;width:102.8px;top:156.5px">600,00</div>
<div class="a ser c r" style="left:438px;width:102.8px;top:156.5px">400,00</div>
<div class="a ser c r" style="left:576px;width:102.8px;top:156.5px">200,00</div>
<div class="a" style="left:622.3px;top:173.0px;width:15.8px;height:16px;background:linear-gradient(90deg,#a3dcc2,#e6f5ee)"></div>
<div class="a ser c" style="left:92.3px;top:176.5px">Impressão</div>
<div class="a ser c r" style="left:300px;width:102.8px;top:176.5px">935,00</div>
<div class="a ser c r" style="left:438px;width:102.8px;top:176.5px">870,00</div>
<div class="a ser c r" style="left:576px;width:102.8px;top:176.5px">65,00</div>
<div class="a" style="left:622.3px;top:193.0px;width:12.1px;height:16px;background:linear-gradient(90deg,#a3dcc2,#e6f5ee)"></div>
<div class="a ser c" style="left:92.3px;top:196.5px">Fotografia</div>
<div class="a ser c r" style="left:300px;width:102.8px;top:196.5px">1.625,00</div>
<div class="a ser c r" style="left:438px;width:102.8px;top:196.5px">1.575,00</div>
<div class="a ser c r" style="left:576px;width:102.8px;top:196.5px">50,00</div>
<div class="a" style="left:616.1px;top:213.0px;width:4.8px;height:16px;background:linear-gradient(90deg,#f3f3f3,#b8b8b8)"></div>
<div class="a ser c" style="left:92.3px;top:216.5px">Decorações</div>
<div class="a ser c r" style="left:300px;width:102.8px;top:216.5px">700,00</div>
<div class="a ser c r" style="left:438px;width:102.8px;top:216.5px">720,00</div>
<div class="a ser c r" style="left:576px;width:102.8px;top:216.5px">-20,00</div>
<div class="a" style="left:622.3px;top:233.0px;width:12.1px;height:16px;background:linear-gradient(90deg,#a3dcc2,#e6f5ee)"></div>
<div class="a ser c" style="left:92.3px;top:236.5px">Flores</div>
<div class="a ser c r" style="left:300px;width:102.8px;top:236.5px">900,00</div>
<div class="a ser c r" style="left:438px;width:102.8px;top:236.5px">850,00</div>
<div class="a ser c r" style="left:576px;width:102.8px;top:236.5px">50,00</div>
<div class="a" style="left:622.3px;top:253.0px;width:65.5px;height:16px;background:linear-gradient(90deg,#a3dcc2,#e6f5ee)"></div>
<div class="a ser c" style="left:92.3px;top:256.5px">Presentes</div>
<div class="a ser c r" style="left:300px;width:102.8px;top:256.5px">1.345,00</div>
<div class="a ser c r" style="left:438px;width:102.8px;top:256.5px">1.075,00</div>
<div class="a ser c r" style="left:576px;width:102.8px;top:256.5px">270,00</div>
<div class="a" style="left:605.2px;top:273.0px;width:15.8px;height:16px;background:linear-gradient(90deg,#f3f3f3,#b8b8b8)"></div>
<div class="a ser c" style="left:92.3px;top:276.5px">Viagem</div>
<div class="a ser c r" style="left:300px;width:102.8px;top:276.5px">100,00</div>
<div class="a ser c r" style="left:438px;width:102.8px;top:276.5px">165,00</div>
<div class="a ser c r" style="left:576px;width:102.8px;top:276.5px">-65,00</div>
<div class="a" style="left:588.0px;top:293.0px;width:33.0px;height:16px;background:linear-gradient(90deg,#f3f3f3,#b8b8b8)"></div>
<div class="a ser c" style="left:92.3px;top:296.5px">Outros</div>
<div class="a ser c r" style="left:300px;width:102.8px;top:296.5px">885,00</div>
<div class="a ser c r" style="left:438px;width:102.8px;top:296.5px">1.021,00</div>
<div class="a ser c r" style="left:576px;width:102.8px;top:296.5px">-136,00</div>
<div class="a" style="left:621.0px;top:112px;width:1px;height:199px;background:repeating-linear-gradient(180deg,#f4a56a 0,#f4a56a 2px,rgba(244,165,106,.25) 2px,rgba(244,165,106,.25) 3px)"></div>
<div class="a" style="left:89px;top:311px;width:601px;height:20px;background:#c6ebda"></div>
<div class="a" style="left:92.40px;top:313.67px;font-family:'Liberation Serif',serif;font-size:14.3px;font-weight:bold;line-height:16px;color:#0c0c0c;letter-spacing:0.080px">Total de despesas</div>
<div class="a" style="left:347.70px;top:313.55px;font-family:'Liberation Serif',serif;font-size:14.67px;font-weight:bold;line-height:16px;color:#0c0c0c;letter-spacing:0.264px">17.630,00</div>
<div class="a" style="left:485.70px;top:313.55px;font-family:'Liberation Serif',serif;font-size:14.67px;font-weight:bold;line-height:16px;color:#0c0c0c;letter-spacing:0.264px">17.374,00</div>
<div class="a" style="left:642.75px;top:313.55px;font-family:'Liberation Serif',serif;font-size:14.67px;font-weight:bold;line-height:16px;color:#0c0c0c;letter-spacing:0.272px">256,00</div>
<svg style="left:686px;top:327px" width="4" height="4"><path d="M2.4 0H4V4H0V2.4H2.4Z" fill="#3a4aa8"/></svg>
<svg style="left:0;top:-165px" width="760" height="1100" viewBox="0 0 760 1100">
<path d="M406.1 766.5L384.89 563.00A204.6 204.6 0 1 1 348.02 962.68Z" fill="#4c8b6d" stroke="#4c8b6d" stroke-width=".4"/>
<path d="M406.1 766.5L348.02 962.68A204.6 204.6 0 0 1 286.65 932.61Z" fill="#559b78" stroke="#559b78" stroke-width=".4"/>
<path d="M406.1 766.5L286.65 932.61A204.6 204.6 0 0 1 263.95 913.66Z" fill="#5faa84" stroke="#5faa84" stroke-width=".4"/>
<path d="M406.1 766.5L263.95 913.66A204.6 204.6 0 0 1 225.39 862.45Z" fill="#68b890" stroke="#68b890" stroke-width=".4"/>
<path d="M406.1 766.5L225.39 862.45A204.6 204.6 0 0 1 202.18 749.84Z" fill="#70c69c" stroke="#70c69c" stroke-width=".4"/>
<path d="M406.1 766.5L202.18 749.84A204.6 204.6 0 0 1 213.34 697.91Z" fill="#85d0a9" stroke="#85d0a9" stroke-width=".4"/>
<path d="M406.1 766.5L213.34 697.91A204.6 204.6 0 0 1 243.13 642.80Z" fill="#9edab9" stroke="#9edab9" stroke-width=".4"/>
<path d="M406.1 766.5L243.13 642.80A204.6 204.6 0 0 1 302.18 590.26Z" fill="#b1dfc8" stroke="#b1dfc8" stroke-width=".4"/>
<path d="M406.1 766.5L302.18 590.26A204.6 204.6 0 0 1 312.88 584.37Z" fill="#c3e6d4" stroke="#c3e6d4" stroke-width=".4"/>
<path d="M406.1 766.5L312.88 584.37A204.6 204.6 0 0 1 384.89 563.00Z" fill="#d3ebde" stroke="#d3ebde" stroke-width=".4"/>
<path d="M406.1 766.5L384.89 563.00" stroke="rgba(255,255,255,.2)" stroke-width=".7" fill="none"/>
<path d="M406.1 766.5L348.02 962.68" stroke="rgba(255,255,255,.2)" stroke-width=".7" fill="none"/>
<path d="M406.1 766.5L286.65 932.61" stroke="rgba(255,255,255,.2)" stroke-width=".7" fill="none"/>
<path d="M406.1 766.5L263.95 913.66" stroke="rgba(255,255,255,.2)" stroke-width=".7" fill="none"/>
<path d="M406.1 766.5L225.39 862.45" stroke="rgba(255,255,255,.2)" stroke-width=".7" fill="none"/>
<path d="M406.1 766.5L202.18 749.84" stroke="rgba(255,255,255,.2)" stroke-width=".7" fill="none"/>
<path d="M406.1 766.5L213.34 697.91" stroke="rgba(255,255,255,.2)" stroke-width=".7" fill="none"/>
<path d="M406.1 766.5L243.13 642.80" stroke="rgba(255,255,255,.2)" stroke-width=".7" fill="none"/>
<path d="M406.1 766.5L302.18 590.26" stroke="rgba(255,255,255,.2)" stroke-width=".7" fill="none"/>
<path d="M406.1 766.5L312.88 584.37" stroke="rgba(255,255,255,.2)" stroke-width=".7" fill="none"/>
</svg>
<div class="a" style="left:304.50px;top:364.94px;font-family:'Liberation Serif',serif;font-size:13.5px;line-height:16px;color:#0a0a0a;letter-spacing:0.108px">Outros</div>
<div class="a" style="left:314.10px;top:380.34px;font-family:'Liberation Serif',serif;font-size:13.5px;line-height:16px;color:#0a0a0a;letter-spacing:-0.200px">6%</div>
<div class="a" style="left:255.30px;top:382.74px;font-family:'Liberation Serif',serif;font-size:13.5px;line-height:16px;color:#0a0a0a;letter-spacing:-0.090px">Viagem</div>
<div class="a" style="left:267.60px;top:397.94px;font-family:'Liberation Serif',serif;font-size:13.5px;line-height:16px;color:#0a0a0a;letter-spacing:-0.500px">1%</div>
<div class="a" style="left:202.70px;top:410.34px;font-family:'Liberation Serif',serif;font-size:13.5px;line-height:16px;color:#0a0a0a;letter-spacing:0.422px">Presentes</div>
<div class="a" style="left:221.20px;top:425.14px;font-family:'Liberation Serif',serif;font-size:13.5px;line-height:16px;color:#0a0a0a;letter-spacing:-0.100px">6%</div>
<div class="a" style="left:177.20px;top:475.84px;font-family:'Liberation Serif',serif;font-size:13.5px;line-height:16px;color:#0a0a0a;letter-spacing:0.142px">Flores</div>
<div class="a" style="left:185.30px;top:491.14px;font-family:'Liberation Serif',serif;font-size:13.5px;line-height:16px;color:#0a0a0a;letter-spacing:-0.100px">5%</div>
<div class="a" style="left:126.10px;top:538.94px;font-family:'Liberation Serif',serif;font-size:13.5px;line-height:16px;color:#0a0a0a;letter-spacing:0.103px">Decorações</div>
<div class="a" style="left:148.90px;top:553.74px;font-family:'Liberation Serif',serif;font-size:13.5px;line-height:16px;color:#0a0a0a;letter-spacing:-0.050px">4%</div>
<div class="a" style="left:132.30px;top:633.64px;font-family:'Liberation Serif',serif;font-size:13.5px;line-height:16px;color:#0a0a0a;letter-spacing:0.155px">Fotografia</div>
<div class="a" style="left:152.10px;top:648.94px;font-family:'Liberation Serif',serif;font-size:13.5px;line-height:16px;color:#0a0a0a;letter-spacing:0.100px">9%</div>
<div class="a" style="left:170.10px;top:727.94px;font-family:'Liberation Serif',serif;font-size:13.5px;line-height:16px;color:#0a0a0a;letter-spacing:0.368px">Impressão</div>
<div class="a" style="left:190.60px;top:743.04px;font-family:'Liberation Serif',serif;font-size:13.5px;line-height:16px;color:#0a0a0a;letter-spacing:-0.050px">5%</div>
<div class="a" style="left:624.80px;top:607.74px;font-family:'Liberation Serif',serif;font-size:13.5px;line-height:16px;color:#0a0a0a;letter-spacing:0.183px">Roupas</div>
<div class="a" style="left:632.50px;top:622.94px;font-family:'Liberation Serif',serif;font-size:13.5px;line-height:16px;color:#0a0a0a;letter-spacing:0.217px">56%</div>
<div class="a" style="left:1139px;top:130px;width:67px;height:23px;border:2px solid #1a7044"></div>
<div class="a" style="left:1201px;top:148px;width:7px;height:7px;background:#1a7044;border:1px solid #fff"></div>
</div>
<div class="a" style="left:0;top:930px;width:1406px;height:35px;background:#f0f0f0;border-top:1px solid #e1e1e1"></div>
<div class="a" style="left:0;top:962px;width:1406px;height:1px;background:#c6c6c6"></div>
<div class="a" style="left:0;top:963px;width:1406px;height:2px;background:#f5f5f5"></div>
<svg style="left:26px;top:940px" width="8" height="11"><path d="M6 0.8L1.4 5.4L6 10" fill="none" stroke="#a6a6a6" stroke-width="1.2" stroke-linecap="round" stroke-linejoin="round"/></svg>
<svg style="left:58px;top:940px" width="8" height="11"><path d="M1.6 0.8L6.2 5.4L1.6 10" fill="none" stroke="#a6a6a6" stroke-width="1.2" stroke-linecap="round" stroke-linejoin="round"/></svg>
<div class="a" style="left:114px;top:934px;width:52px;height:24px;background:#3da878;border-radius:5px"></div>
<div class="a" style="left:125.20px;top:938.79px;font-size:13.6px;line-height:16px;color:#1b1b1b;letter-spacing:-0.017px">Início</div>
<div class="a" style="left:170px;top:937.5px;width:1px;height:16.5px;background:#d4d4d4"></div>
<div class="a" style="left:174.5px;top:930px;width:185px;height:28px;background:linear-gradient(180deg,#fff 0,#fff 45%,#cdeedd 100%);border-radius:0 0 6px 6px;box-shadow:0 0 2.5px rgba(0,0,0,.22)"></div>
<div class="a" style="left:183.20px;top:936.09px;font-size:13.6px;font-weight:bold;line-height:16px;color:#1b1b1b;letter-spacing:0.058px">Orçamento de casamento</div>
<div class="a" style="left:183px;top:952.3px;width:168px;height:2.2px;background:#107c41;border-radius:1px"></div>
<div class="a" style="left:363.5px;top:937.5px;width:1px;height:16.5px;background:#d4d4d4"></div>
<div class="a" style="left:368px;top:934px;width:198px;height:24px;background:#a8e0c5;border-radius:5px"></div>
<div class="a" style="left:382.00px;top:938.79px;font-size:13.6px;line-height:16px;color:#1b1b1b;letter-spacing:0.004px">Roupas-Festa-Música-Fotos</div>
<div class="a" style="left:571px;top:937.5px;width:1px;height:16.5px;background:#d4d4d4"></div>
<div class="a" style="left:575px;top:934px;width:223.5px;height:24px;background:#c5ecd9;border-radius:5px"></div>
<div class="a" style="left:589.00px;top:938.79px;font-size:13.6px;line-height:16px;color:#1b1b1b;letter-spacing:0.046px">Decor-Flores-Presentes-Viagem</div>
<div class="a" style="left:803px;top:937.5px;width:1px;height:16.5px;background:#d4d4d4"></div>
<svg style="left:845px;top:939px" width="13" height="13"><path d="M6.5 1V12M1 6.5H12" stroke="#333" stroke-width="1.1" fill="none"/></svg>
<div class="a" style="left:1152.2px;top:940.6999999999999px;width:1.5px;height:1.5px;background:#8a8a8a;border-radius:1px"></div>
<div class="a" style="left:1152.2px;top:944.6999999999999px;width:1.5px;height:1.5px;background:#8a8a8a;border-radius:1px"></div>
<div class="a" style="left:1152.2px;top:948.6999999999999px;width:1.5px;height:1.5px;background:#8a8a8a;border-radius:1px"></div>
<svg style="left:1172px;top:940px" width="10" height="11"><path d="M8.6 1L1.4 5.5L8.6 10Z" fill="#444"/></svg>
<div class="a" style="left:1185.5px;top:941.5px;width:240px;height:9px;background:#6f6f6f;border-radius:4.5px"></div>
</body></html>
